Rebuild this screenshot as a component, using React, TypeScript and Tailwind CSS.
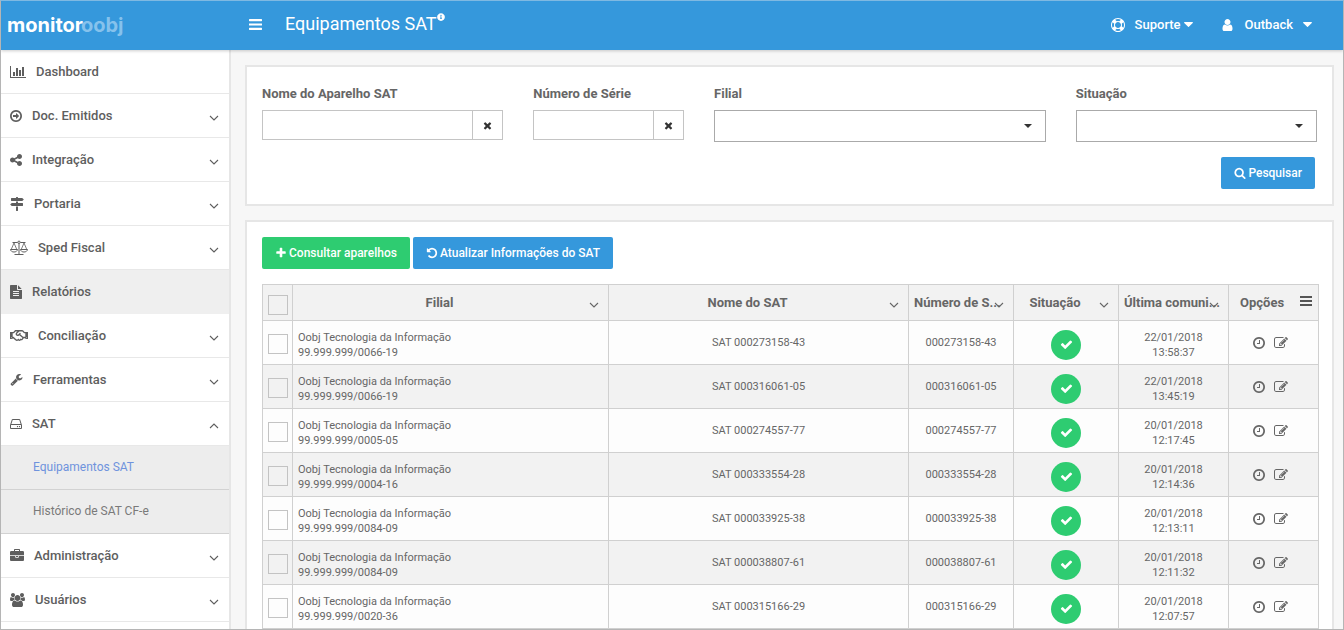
import type { ReactNode } from "react";
import { FaInfoCircle, FaRegHandshake } from "react-icons/fa";

const PATHS = {
  check:
    "M1671 566q0 40-28 68l-724 724-136 136q-28 28-68 28t-68-28l-136-136-362-362q-28-28-28-68t28-68l136-136q28-28 68-28t68 28l294 295 656-657q28-28 68-28t68 28l136 136q28 28 28 68z",
  times:
    "M1490 1322q0 40-28 68l-136 136q-28 28-68 28t-68-28l-294-294-294 294q-28 28-68 28t-68-28l-136-136q-28-28-28-68t28-68l294-294-294-294q-28-28-28-68t28-68l136-136q28-28 68-28t68 28l294 294 294-294q28-28 68-28t68 28l136 136q28 28 28 68t-28 68l-294 294 294 294q28 28 28 68z",
  plus: "M1600 736v192q0 40-28 68t-68 28h-416v416q0 40-28 68t-68 28h-192q-40 0-68-28t-28-68v-416h-416q-40 0-68-28t-28-68v-192q0-40 28-68t68-28h416v-416q0-40 28-68t68-28h192q40 0 68 28t28 68v416h416q40 0 68 28t28 68z",
  search:
    "M1216 832q0-185-131.5-316.5t-316.5-131.5-316.5 131.5-131.5 316.5 131.5 316.5 316.5 131.5 316.5-131.5 131.5-316.5zm512 832q0 52-38 90t-90 38q-54 0-90-38l-343-342q-179 124-399 124-143 0-273.5-55.5t-225-150-150-225-55.5-273.5 55.5-273.5 150-225 225-150 273.5-55.5 273.5 55.5 225 150 150 225 55.5 273.5q0 220-124 399l343 343q37 37 37 90z",
  undo: "M1664 896q0 156-61 298t-164 245-245 164-298 61q-172 0-327-72.5t-264-204.5q-7-10-6.5-22.5t8.5-20.5l137-138q10-9 25-9 16 2 23 12 73 95 179 147t225 52q104 0 198.5-40.5t163.5-109.5 109.5-163.5 40.5-198.5-40.5-198.5-109.5-163.5-163.5-109.5-198.5-40.5q-98 0-188 35.5t-160 101.5l137 138q31 30 14 69-17 40-59 40h-448q-26 0-45-19t-19-45v-448q0-42 40-59 39-17 69 14l130 129q107-101 244.5-156.5t284.5-55.5q156 0 298 61t245 164 164 245 61 298z",
  clock:
    "M1024 544v448q0 14-9 23t-23 9h-320q-14 0-23-9t-9-23v-64q0-14 9-23t23-9h224v-352q0-14 9-23t23-9h64q14 0 23 9t9 23zm416 352q0-148-73-273t-198-198-273-73-273 73-198 198-73 273 73 273 198 198 273 73 273-73 198-198 73-273zm224 0q0 209-103 385.5t-279.5 279.5-385.5 103-385.5-103-279.5-279.5-103-385.5 103-385.5 279.5-279.5 385.5-103 385.5 103 279.5 279.5 103 385.5z",
  edit: "M888 1184l116-116-152-152-116 116v56h96v96h56zm440-720q-16-16-33 1l-350 350q-17 17-1 33t33-1l350-350q17-17 1-33zm80 594v190q0 119-84.5 203.5t-203.5 84.5h-832q-119 0-203.5-84.5t-84.5-203.5v-832q0-119 84.5-203.5t203.5-84.5h832q63 0 117 25 15 7 18 23 3 17-9 29l-49 49q-14 14-32 8-23-6-45-6h-832q-66 0-113 47t-47 113v832q0 66 47 113t113 47h832q66 0 113-47t47-113v-126q0-13 9-22l64-64q15-15 35-7t20 29zm-96-738l288 288-672 672h-288v-288zm444 132l-92 92-288-288 92-92q28-28 68-28t68 28l152 152q28 28 28 68t-28 68z",
  bars: "M1664 1344v128q0 26-19 45t-45 19h-1408q-26 0-45-19t-19-45v-128q0-26 19-45t45-19h1408q26 0 45 19t19 45zm0-512v128q0 26-19 45t-45 19h-1408q-26 0-45-19t-19-45v-128q0-26 19-45t45-19h1408q26 0 45 19t19 45zm0-512v128q0 26-19 45t-45 19h-1408q-26 0-45-19t-19-45v-128q0-26 19-45t45-19h1408q26 0 45 19t19 45z",
  ring: "M896 0q182 0 348 71t286 191 191 286 71 348-71 348-191 286-286 191-348 71-348-71-286-191-191-286-71-348 71-348 191-286 286-191 348-71zm0 128q-190 0-361 90l194 194q82-28 167-28t167 28l194-194q-171-90-361-90zm-678 1129l194-194q-28-82-28-167t28-167l-194-194q-90 171-90 361t90 361zm678 407q190 0 361-90l-194-194q-82 28-167 28t-167-28l-194 194q171 90 361 90zm0-384q159 0 271.5-112.5t112.5-271.5-112.5-271.5-271.5-112.5-271.5 112.5-112.5 271.5 112.5 271.5 271.5 112.5zm484-217l194 194q90-171 90-361t-90-361l-194 194q28 82 28 167t-28 167z",
  user: "M1536 1399q0 109-62.5 187t-150.5 78h-854q-88 0-150.5-78t-62.5-187q0-85 8.5-160.5t31.5-152 58.5-131 94-89 134.5-34.5q131 128 313 128t313-128q76 0 134.5 34.5t94 89 58.5 131 31.5 152 8.5 160.5zm-256-887q0 159-112.5 271.5t-271.5 112.5-271.5-112.5-112.5-271.5 112.5-271.5 271.5-112.5 271.5 112.5 112.5 271.5z",
  caret:
    "M1408 704q0 26-19 45l-448 448q-19 19-45 19t-45-19l-448-448q-19-19-19-45t19-45 45-19h896q26 0 45 19t19 45z",
  chart:
    "M640 896v512h-256v-512h256zm384-512v1024h-256v-1024h256zm1024 1152v128h-2048v-1536h128v1408h1920zm-640-896v768h-256v-768h256zm384-384v1152h-256v-1152h256z",
  arrow:
    "M1280 896q0 14-9 23l-320 320q-9 9-23 9-13 0-22.5-9.5t-9.5-22.5v-192h-352q-13 0-22.5-9.5t-9.5-22.5v-192q0-13 9.5-22.5t22.5-9.5h352v-192q0-14 9-23t23-9q12 0 24 10l319 319q9 9 9 23zm160 0q0-148-73-273t-198-198-273-73-273 73-198 198-73 273 73 273 198 198 273 73 273-73 198-198 73-273zm224 0q0 209-103 385.5t-279.5 279.5-385.5 103-385.5-103-279.5-279.5-103-385.5 103-385.5 279.5-279.5 385.5-103 385.5 103 279.5 279.5 103 385.5z",
  share:
    "M1344 1024q133 0 226.5 93.5t93.5 226.5-93.5 226.5-226.5 93.5-226.5-93.5-93.5-226.5q0-12 2-34l-360-180q-92 86-218 86-133 0-226.5-93.5t-93.5-226.5 93.5-226.5 226.5-93.5q126 0 218 86l360-180q-2-22-2-34 0-133 93.5-226.5t226.5-93.5 226.5 93.5 93.5 226.5-93.5 226.5-226.5 93.5q-126 0-218-86l-360 180q2 22 2 34t-2 34l360 180q92-86 218-86z",
  signs:
    "M1745 297q10 10 10 23t-10 23l-141 141q-28 28-68 28h-1344q-26 0-45-19t-19-45v-256q0-26 19-45t45-19h576v-64q0-26 19-45t45-19h128q26 0 45 19t19 45v64h512q40 0 68 28zm-977 919h256v512q0 26-19 45t-45 19h-128q-26 0-45-19t-19-45v-512zm832-448q26 0 45 19t19 45v256q0 26-19 45t-45 19h-1344q-40 0-68-28l-141-141q-10-10-10-23t10-23l141-141q28-28 68-28h512v-192h256v192h576z",
  file: "M1596 476q14 14 28 36h-472v-472q22 14 36 28zm-476 164h544v1056q0 40-28 68t-68 28h-1344q-40 0-68-28t-28-68v-1600q0-40 28-68t68-28h800v544q0 40 28 68t68 28zm160 736v-64q0-14-9-23t-23-9h-704q-14 0-23 9t-9 23v64q0 14 9 23t23 9h704q14 0 23-9t9-23zm0-256v-64q0-14-9-23t-23-9h-704q-14 0-23 9t-9 23v64q0 14 9 23t23 9h704q14 0 23-9t9-23zm0-256v-64q0-14-9-23t-23-9h-704q-14 0-23 9t-9 23v64q0 14 9 23t23 9h704q14 0 23-9t9-23z",
  wrench:
    "M448 1472q0-26-19-45t-45-19-45 19-19 45 19 45 45 19 45-19 19-45zm644-420l-682 682q-37 37-90 37-52 0-91-37l-106-108q-38-36-38-90 0-53 38-91l681-681q39 98 114.5 173.5t173.5 114.5zm634-435q0 39-23 106-47 134-164.5 217.5t-258.5 83.5q-185 0-316.5-131.5t-131.5-316.5 131.5-316.5 316.5-131.5q58 0 121.5 16.5t107.5 46.5q16 11 16 28t-16 28l-293 169v224l193 107q5-3 79-48.5t135.5-81 70.5-35.5q15 0 23.5 10t8.5 25z",
  hdd: "M1168 1216q0 33-23.5 56.5t-56.5 23.5-56.5-23.5-23.5-56.5 23.5-56.5 56.5-23.5 56.5 23.5 23.5 56.5zm256 0q0 33-23.5 56.5t-56.5 23.5-56.5-23.5-23.5-56.5 23.5-56.5 56.5-23.5 56.5 23.5 23.5 56.5zm112 160v-320q0-13-9.5-22.5t-22.5-9.5h-1216q-13 0-22.5 9.5t-9.5 22.5v320q0 13 9.5 22.5t22.5 9.5h1216q13 0 22.5-9.5t9.5-22.5zm-1230-480h1180l-157-482q-4-13-16-21.5t-26-8.5h-782q-14 0-26 8.5t-16 21.5zm1358 160v320q0 66-47 113t-113 47h-1216q-66 0-113-47t-47-113v-320q0-25 16-75l197-606q17-53 63-86t101-33h782q55 0 101 33t63 86l197 606q16 50 16 75z",
  briefcase:
    "M640 256h512v-128h-512v128zm1152 640v480q0 66-47 113t-113 47h-1472q-66 0-113-47t-47-113v-480h672v160q0 26 19 45t45 19h320q26 0 45-19t19-45v-160h672zm-768 0v128h-256v-128h256zm768-480v384h-1792v-384q0-66 47-113t113-47h352v-160q0-40 28-68t68-28h576q40 0 68 28t28 68v160h352q66 0 113 47t47 113z",
  users:
    "M657 896q-162 5-265 128h-134q-82 0-138-40.5t-56-118.5q0-353 124-353 6 0 43.5 21t97.5 42.5 119 21.5q67 0 133-23-5 37-5 66 0 139 81 256zm1071 637q0 120-73 189.5t-194 69.5h-874q-121 0-194-69.5t-73-189.5q0-53 3.5-103.5t14-109 26.5-108.5 43-97.5 62-81 85.5-53.5 111.5-20q10 0 43 21.5t73 48 107 48 135 21.5 135-21.5 107-48 73-48 43-21.5q61 0 111.5 20t85.5 53.5 62 81 43 97.5 26.5 108.5 14 109 3.5 103.5zm-1024-1277q0 106-75 181t-181 75-181-75-75-181 75-181 181-75 181 75 75 181zm704 384q0 159-112.5 271.5t-271.5 112.5-271.5-112.5-112.5-271.5 112.5-271.5 271.5-112.5 271.5 112.5 112.5 271.5zm576 225q0 78-56 118.5t-138 40.5h-134q-103-123-265-128 81-117 81-256 0-29-5-66 66 23 133 23 59 0 119-21.5t97.5-42.5 43.5-21q124 0 124 353zm-128-609q0 106-75 181t-181 75-181-75-75-181 75-181 181-75 181 75 75 181z",
};

type IconProps = { name: keyof typeof PATHS; className: string; box?: string };

function Icon({ name, className, box = "0 0 1792 1792" }: IconProps) {
  return (
    <svg viewBox={box} className={`shrink-0 ${className}`} fill="currentColor" aria-hidden="true">
      <path d={PATHS[name]} />
    </svg>
  );
}

function Chevron({ up = false }: { up?: boolean }) {
  return (
    <svg viewBox="0 0 10 6" className="h-[6px] w-[10px] shrink-0" fill="none" stroke="currentColor" strokeWidth="1.1" aria-hidden="true">
      <path d={up ? "M1 5 5 1 9 5" : "M1 1 5 5 9 1"} />
    </svg>
  );
}

function Scale() {
  return (
    <svg viewBox="0 0 18 16" className="h-4 w-[18px] shrink-0" fill="none" stroke="currentColor" strokeWidth="1" aria-hidden="true">
      <path d="M2.5 2.5H7.6M10.4 2.5H15.5M9 3.5V14.5M4.5 14.5H13.5" />
      <circle cx="9" cy="2.3" r="1.2" />
      <path d="M4 3 1.2 9.5M4 3 6.8 9.5M14 3 11.2 9.5M14 3 16.8 9.5" strokeWidth="0.8" />
      <path d="M.5 9.5H7.5C7.2 11.2 5.8 12 4 12S.8 11.2 .5 9.5ZM10.5 9.5H17.5C17.2 11.2 15.8 12 14 12S10.8 11.2 10.5 9.5Z" />
    </svg>
  );
}

type MenuItem = { label: string; icon: ReactNode; arrow?: "down" | "up"; active?: boolean; children?: string[] };

const MENU: MenuItem[] = [
  { label: "Dashboard", icon: <Icon name="chart" box="0 0 2048 1792" className="h-[14px] w-4" /> },
  { label: "Doc. Emitidos", icon: <Icon name="arrow" box="128 128 1536 1536" className="size-3" />, arrow: "down" },
  { label: "Integração", icon: <Icon name="share" box="128 128 1536 1536" className="size-3" />, arrow: "down" },
  { label: "Portaria", icon: <Icon name="signs" className="size-[14px]" />, arrow: "down" },
  { label: "Sped Fiscal", icon: <Scale />, arrow: "down" },
  { label: "Relatórios", icon: <Icon name="file" box="128 0 1536 1792" className="h-[14px] w-3" />, active: true },
  { label: "Conciliação", icon: <FaRegHandshake className="h-[15px] w-[18px] shrink-0" />, arrow: "down" },
  { label: "Ferramentas", icon: <Icon name="wrench" className="size-[13px]" />, arrow: "down" },
  {
    label: "SAT",
    icon: <Icon name="hdd" box="128 128 1536 1536" className="size-3" />,
    arrow: "up",
    children: ["Equipamentos SAT", "Histórico de SAT CF-e"],
  },
  { label: "Administração", icon: <Icon name="briefcase" className="size-[14px]" />, arrow: "down" },
  { label: "Usuários", icon: <Icon name="users" box="64 0 1920 1792" className="h-[14px] w-[15px]" />, arrow: "down" },
];

const ROWS = [
  { cnpj: "99.999.999/0066-19", serial: "000273158-43", date: "22/01/2018", time: "13:58:37" },
  { cnpj: "99.999.999/0066-19", serial: "000316061-05", date: "22/01/2018", time: "13:45:19" },
  { cnpj: "99.999.999/0005-05", serial: "000274557-77", date: "20/01/2018", time: "12:17:45" },
  { cnpj: "99.999.999/0004-16", serial: "000333554-28", date: "20/01/2018", time: "12:14:36" },
  { cnpj: "99.999.999/0084-09", serial: "000033925-38", date: "20/01/2018", time: "12:13:11" },
  { cnpj: "99.999.999/0084-09", serial: "000038807-61", date: "20/01/2018", time: "12:11:32" },
  { cnpj: "99.999.999/0020-36", serial: "000315166-29", date: "20/01/2018", time: "12:07:57" },
];

function Sidebar() {
  return (
    <nav className="w-[230px] shrink-0 border-r-2 border-[#e6e6e6] bg-white text-[13px] font-medium text-[#5e5e5e]">
      <ul>
        {MENU.map((item) => (
          <li key={item.label}>
            <a
              href="#"
              className={`flex h-11 items-center border-b pr-[10px] pl-[9px] ${item.active ? "border-[#efefef] bg-[#efefef]" : "border-[#e8e8e8]"}`}
            >
              {item.icon}
              <span className="flex-1 pl-[10px]">{item.label}</span>
              {item.arrow && (
                <span className="pt-1">
                  <Chevron up={item.arrow === "up"} />
                </span>
              )}
            </a>
            {item.children && (
              <ul className="text-[12px] font-normal">
                {item.children.map((child, i) => (
                  <li key={child}>
                    <a
                      href="#"
                      className={`flex h-11 items-center border-b border-[#d2d2d2] bg-[#ededed] pb-[2px] pl-8 ${i === 0 ? "text-[#6f93dd]" : "text-[#7a7a7a]"}`}
                    >
                      {child}
                    </a>
                  </li>
                ))}
              </ul>
            )}
          </li>
        ))}
      </ul>
    </nav>
  );
}

function TextField({ id, label, span }: { id: string; label: string; span: string }) {
  return (
    <div className={span}>
      <label htmlFor={id} className="block h-[25px] text-[13px] leading-[18px] font-bold text-[#666]">
        {label}
      </label>
      <div className="flex h-[30px] border border-[#c4c4c4] bg-white">
        <input id={id} type="text" className="min-w-0 flex-1 px-2 text-[13px] outline-none" />
        <button type="button" aria-label={`Limpar ${label}`} className="flex w-[30px] items-center justify-center border-l border-[#c4c4c4] text-[#333]">
          <Icon name="times" className="size-[11px]" />
        </button>
      </div>
    </div>
  );
}

function SelectField({ id, label, span }: { id: string; label: string; span: string }) {
  return (
    <div className={span}>
      <label htmlFor={id} className="block h-[25px] text-[13px] leading-[18px] font-bold text-[#666]">
        {label}
      </label>
      <div className="relative">
        <select id={id} className="block h-8 w-full appearance-none border border-[#aaa] bg-white px-3 text-[13px] outline-none" />
        <svg viewBox="0 0 8 4" className="pointer-events-none absolute top-[14px] right-[14px] h-1 w-2" aria-hidden="true">
          <path d="M0 0H8L4 4Z" fill="#333" />
        </svg>
      </div>
    </div>
  );
}

function Check({ label }: { label: string }) {
  return <input type="checkbox" aria-label={label} className="block size-5 appearance-none border border-[#c3c3c3] bg-transparent" />;
}

function HeadCell({ children, full = false }: { children: string; full?: boolean }) {
  return (
    <th className="relative border-r border-b border-[#d0d0d0] p-0 font-bold whitespace-nowrap">
      <div className={full ? "pl-[5px] text-left" : "pr-[22px]"}>{children}</div>
      <span className="absolute right-[9px] bottom-3 flex">
        <Chevron />
      </span>
    </th>
  );
}

function Devices() {
  const cell = "border-r border-b border-[#d0d0d0] p-0 text-center";
  return (
    <table className="mt-[15px] w-full table-fixed border-separate border-spacing-0 border-t border-l border-[#d0d0d0] text-[11px] leading-[15px] text-[#666]">
      <colgroup>
        <col className="w-[30px]" />
        <col />
        <col className="w-[300px]" />
        <col className="w-[105px]" />
        <col className="w-[105px]" />
        <col className="w-[110px]" />
        <col className="w-[90px]" />
      </colgroup>
      <thead>
        <tr className="h-9 bg-[#f2f2f2] text-[13px] leading-[18px]">
          <th className="border-r border-b border-[#d0d0d0] p-0 pt-1 pl-[5px]">
            <Check label="Selecionar todos" />
          </th>
          <HeadCell>Filial</HeadCell>
          <HeadCell>Nome do SAT</HeadCell>
          <HeadCell full>Número de S...</HeadCell>
          <HeadCell>Situação</HeadCell>
          <HeadCell full>Última comuni...</HeadCell>
          <th className="border-r border-b border-[#d0d0d0] p-0 font-bold">
            <div className="flex items-center justify-between pr-[6px] pl-[11px]">
              Opções
              <button type="button" aria-label="Menu da tabela" className="pb-1">
                <svg viewBox="0 0 12 10" className="h-[10px] w-3" fill="#555" aria-hidden="true">
                  <path d="M0 0H12V2H0ZM0 4H12V6H0ZM0 8H12V10H0Z" />
                </svg>
              </button>
            </div>
          </th>
        </tr>
      </thead>
      <tbody>
        {ROWS.map((row) => (
          <tr key={row.serial} className="h-11 bg-[#fdfdfd] even:bg-[#f2f2f2]">
            <td className={`${cell} pt-[2px] pl-[5px]`}>
              <Check label={`Selecionar SAT ${row.serial}`} />
            </td>
            <td className="border-r border-b border-[#d0d0d0] p-0 pt-1 pl-[5px]">
              Oobj Tecnologia da Informação
              <br />
              {row.cnpj}
            </td>
            <td className={cell}>SAT {row.serial}</td>
            <td className={cell}>{row.serial}</td>
            <td className={`${cell} pt-1`}>
              <span className="mx-auto flex size-[30px] items-center justify-center rounded-full bg-[#2ecc71] text-white">
                <Icon name="check" className="size-[13px]" />
              </span>
            </td>
            <td className={`${cell} pt-1`}>
              {row.date}
              <br />
              {row.time}
            </td>
            <td className={cell}>
              <div className="flex items-center justify-center gap-2 pr-[7px]">
                <button type="button" aria-label="Histórico">
                  <Icon name="clock" className="size-[14px]" />
                </button>
                <button type="button" aria-label="Editar">
                  <Icon name="edit" className="size-[14px]" />
                </button>
              </div>
            </td>
          </tr>
        ))}
      </tbody>
    </table>
  );
}

export default function App() {
  return (
    <div className="flex h-screen flex-col overflow-hidden border border-[#b5b5b5] border-t-[#7fb9e2] bg-[#f7f7f7] font-['Roboto',sans-serif]">
      <header className="z-10 flex h-[49px] shrink-0 items-center bg-[#3598dc] pb-[2px] text-white shadow-[0_1px_3px_rgba(0,0,0,0.2)]">
        <a href="#" aria-label="monitoroobj" className="w-[248px] pl-[6px] font-['Inter',sans-serif] text-[20px] leading-6 font-bold">
          monitor<span className="-ml-[2px] text-[#86c2ec]">oobj</span>
        </a>
        <button type="button" aria-label="Alternar menu">
          <Icon name="bars" box="128 256 1536 1280" className="h-[11px] w-[13px]" />
        </button>
        <h1 className="flex flex-1 items-start pb-[2px] pl-[23px] text-[18px] leading-6">
          Equipamentos SAT
          <FaInfoCircle className="mt-px size-2" />
        </h1>
        <button type="button" className="flex items-center text-[13px] font-medium">
          <Icon name="ring" className="mr-[10px] size-[14px]" />
          Suporte
          <Icon name="caret" box="384 640 1024 576" className="ml-[3px] h-[5px] w-[9px]" />
        </button>
        <button type="button" className="mr-[31px] ml-[29px] flex items-center text-[13px] font-medium">
          <Icon name="user" box="256 128 1280 1536" className="mr-3 h-3 w-[11px]" />
          Outback
          <Icon name="caret" box="384 640 1024 576" className="ml-[10px] h-[5px] w-[9px]" />
        </button>
      </header>
      <div className="flex min-h-0 flex-1">
        <Sidebar />
        <main className="min-w-0 flex-1 overflow-hidden pt-[15px] pr-[9px] pl-[14px]">
          <form className="border-2 border-[#e6e6e6] bg-white px-[15px] pt-[18px] pb-[15px]" onSubmit={(e) => e.preventDefault()}>
            <div className="grid grid-cols-12 gap-x-[30px]">
              <TextField id="nome" label="Nome do Aparelho SAT" span="col-span-3" />
              <TextField id="serie" label="Número de Série" span="col-span-2" />
              <SelectField id="filial" label="Filial" span="col-span-4" />
              <SelectField id="situacao" label="Situação" span="col-span-3" />
            </div>
            <div className="mt-[15px] flex justify-end">
              <button type="submit" className="mr-[2px] flex h-8 items-center gap-[2px] rounded-[2px] bg-[#3598dc] px-[13px] text-[12px] font-medium text-white">
                <Icon name="search" className="size-3" />
                Pesquisar
              </button>
            </div>
          </form>
          <section className="mt-[14px] border-2 border-[#e6e6e6] bg-white pt-[15px] pr-[13px] pl-[15px]">
            <div className="flex gap-[3px] text-[12px] font-medium text-white">
              <button type="button" className="flex h-8 items-center gap-[2px] rounded-[2px] bg-[#2ecc71] px-[13px]">
                <Icon name="plus" className="size-3" />
                Consultar aparelhos
              </button>
              <button type="button" className="flex h-8 items-center gap-[2px] rounded-[2px] bg-[#3598dc] px-[13px]">
                <Icon name="undo" className="size-3" />
                Atualizar Informações do SAT
              </button>
            </div>
            <Devices />
          </section>
        </main>
      </div>
    </div>
  );
}
